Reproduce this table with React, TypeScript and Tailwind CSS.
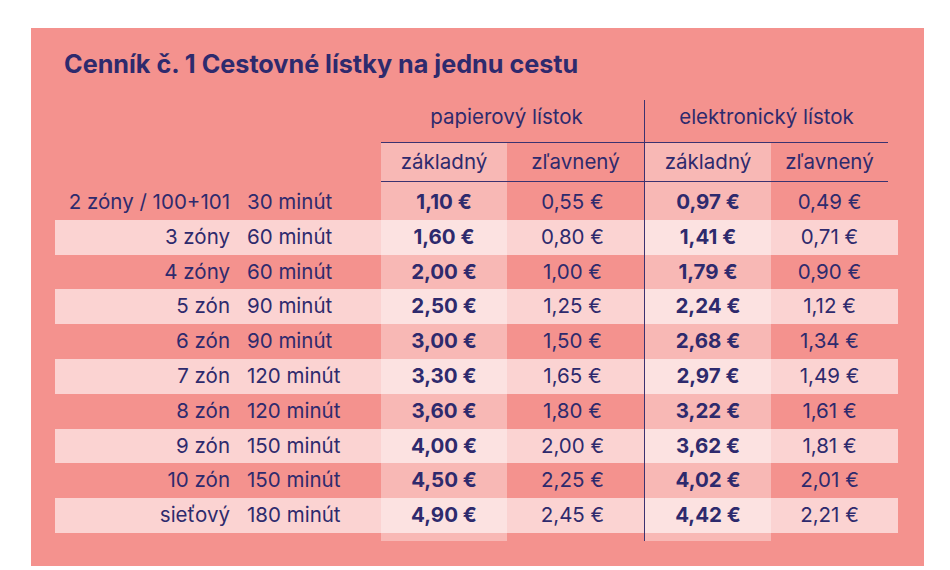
const rows = [
  { zone: "2 zóny / 100+101", time: "30 minút", p: ["1,10 €", "0,55 €", "0,97 €", "0,49 €"] },
  { zone: "3 zóny", time: "60 minút", p: ["1,60 €", "0,80 €", "1,41 €", "0,71 €"] },
  { zone: "4 zóny", time: "60 minút", p: ["2,00 €", "1,00 €", "1,79 €", "0,90 €"] },
  { zone: "5 zón", time: "90 minút", p: ["2,50 €", "1,25 €", "2,24 €", "1,12 €"] },
  { zone: "6 zón", time: "90 minút", p: ["3,00 €", "1,50 €", "2,68 €", "1,34 €"] },
  { zone: "7 zón", time: "120 minút", p: ["3,30 €", "1,65 €", "2,97 €", "1,49 €"] },
  { zone: "8 zón", time: "120 minút", p: ["3,60 €", "1,80 €", "3,22 €", "1,61 €"] },
  { zone: "9 zón", time: "150 minút", p: ["4,00 €", "2,00 €", "3,62 €", "1,81 €"] },
  { zone: "10 zón", time: "150 minút", p: ["4,50 €", "2,25 €", "4,02 €", "2,01 €"] },
  { zone: "sieťový", time: "180 minút", p: ["4,90 €", "2,45 €", "4,42 €", "2,21 €"] },
];

// light column tint used under "základný"
const light = "bg-white/35";
const line = "border-[#3b3270]";

function Spacer({ h }: { h: string }) {
  return (
    <div className={`flex ${h}`}>
      <div className="w-[326px]" />
      <div className={`w-[126px] ${light}`} />
      <div className="w-[137px]" />
      <div className={`w-[127px] border-l ${line} ${light}`} />
    </div>
  );
}

export default function App() {
  return (
    <div
      className="min-h-screen bg-white pl-[31px] pt-[28px] text-[#2e2a6d]"
      style={{ fontFamily: "Inter, 'Noto Sans', sans-serif" }}
    >
      <div className="w-[893px] bg-[#f4928e] px-[24px] pt-[21px] pb-[25px]">
        <h1 className="ml-[9px] text-[25.2px] font-bold leading-[31px]">
          Cenník č. 1 Cestovné lístky na jednu cestu
        </h1>

        <div className="mt-[20px] w-[843px] text-[20.5px]">
          {/* group header */}
          <div className="flex h-[43px]">
            <div className="w-[326px]" />
            <div className={`flex w-[263px] items-center justify-center border-b ${line} pb-[8px] pr-[12px]`}>
              papierový lístok
            </div>
            <div className={`flex w-[244px] items-center justify-center border-b border-l ${line} pb-[8px]`}>
              elektronický lístok
            </div>
          </div>

          {/* sub header */}
          <div className="flex h-[39px]">
            <div className="w-[326px]" />
            <div className={`flex w-[126px] items-center justify-center border-b ${line} ${light}`}>
              základný
            </div>
            <div className={`flex w-[137px] items-center justify-center border-b ${line}`}>
              zľavnený
            </div>
            <div className={`flex w-[127px] items-center justify-center border-b border-l ${line} ${light}`}>
              základný
            </div>
            <div className={`flex w-[117px] items-center justify-center border-b ${line}`}>
              zľavnený
            </div>
          </div>

          <Spacer h="h-[3px]" />

          {rows.map((r, i) => (
            <div key={r.zone} className={`flex h-[34.8px] items-center ${i % 2 === 1 ? "bg-white/60" : ""}`}>
              <div className="w-[181px] pr-[6px] text-right">{r.zone}</div>
              <div className="w-[145px] pl-[11px]">{r.time}</div>
              <div className={`flex h-full w-[126px] items-center justify-center font-bold ${light}`}>{r.p[0]}</div>
              <div className="w-[137px] pr-[6px] text-center">{r.p[1]}</div>
              <div className={`flex h-full w-[127px] items-center justify-center border-l ${line} font-bold ${light}`}>
                {r.p[2]}
              </div>
              <div className="w-[117px] text-center">{r.p[3]}</div>
              <div className="w-[10px]" />
            </div>
          ))}

          <Spacer h="h-[8px]" />
        </div>
      </div>
    </div>
  );
}
